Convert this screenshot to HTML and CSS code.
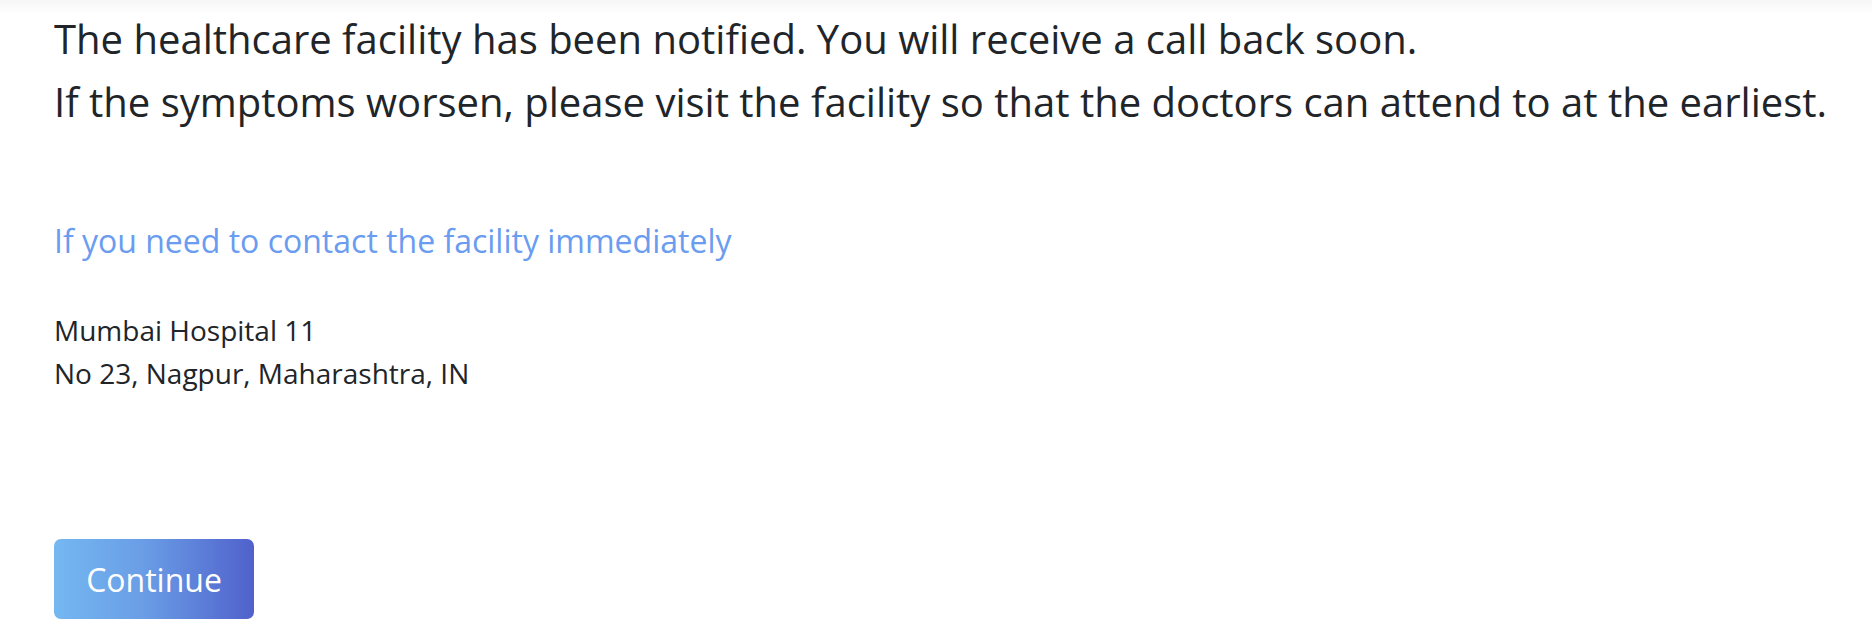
FILE: index.html
```html
<!DOCTYPE html>
<html>
<head>
<meta charset="utf-8">
<link rel="stylesheet" href="styles.css">
</head>
<body>
<div class="topshade"></div>
<main class="page">
  <section class="message">
    <p class="msg-line">The healthcare facility has been notified. You will receive a call back soon.</p>
    <p class="msg-line">If the symptoms worsen, please visit the facility so that the doctors can attend to at the earliest.</p>
  </section>
  <section class="contact">
    <h2 class="contact-title">If you need to contact the facility immediately</h2>
    <div class="address">
      <div>Mumbai Hospital 11</div>
      <div>No 23, Nagpur, Maharashtra, IN</div>
    </div>
  </section>
  <button class="btn-continue">Continue</button>
</main>
</body>
</html>
```

FILE: styles.css
```css
html, body {
  margin: 0;
  padding: 0;
  background: #fff;
}
body {
  font-family: "Open Sans", "Noto Sans", sans-serif;
  color: #212529;
  position: relative;
  height: 640px;
  overflow: hidden;
}
.topshade {
  position: absolute;
  top: 0;
  left: 0;
  right: 0;
  height: 14px;
  background: linear-gradient(#f6f6f6, #ffffff);
}
.page {
  position: relative;
  padding: 7px 16px 0 54px;
  display: flex;
  flex-direction: column;
  align-items: flex-start;
}
.message {
  display: flex;
  flex-direction: column;
}
.msg-line {
  margin: 0;
  font-size: 40px;
  line-height: 63px;
  white-space: nowrap;
}
.contact {
  margin-top: 86px;
}
.contact-title {
  margin: 0;
  font-weight: 400;
  font-size: 32px;
  line-height: 44px;
  color: #6a9cf0;
}
.address {
  margin-top: 46px;
  font-size: 28px;
  line-height: 43px;
}
.btn-continue {
  margin-top: 144px;
  width: 200px;
  height: 80px;
  border: none;
  border-radius: 7px;
  background: linear-gradient(90deg, #74b8f1 0%, #6a9de6 45%, #5061cb 100%);
  color: #fff;
  font-family: "Open Sans", "Noto Sans", sans-serif;
  font-size: 32px;
  padding: 0;
}
```
